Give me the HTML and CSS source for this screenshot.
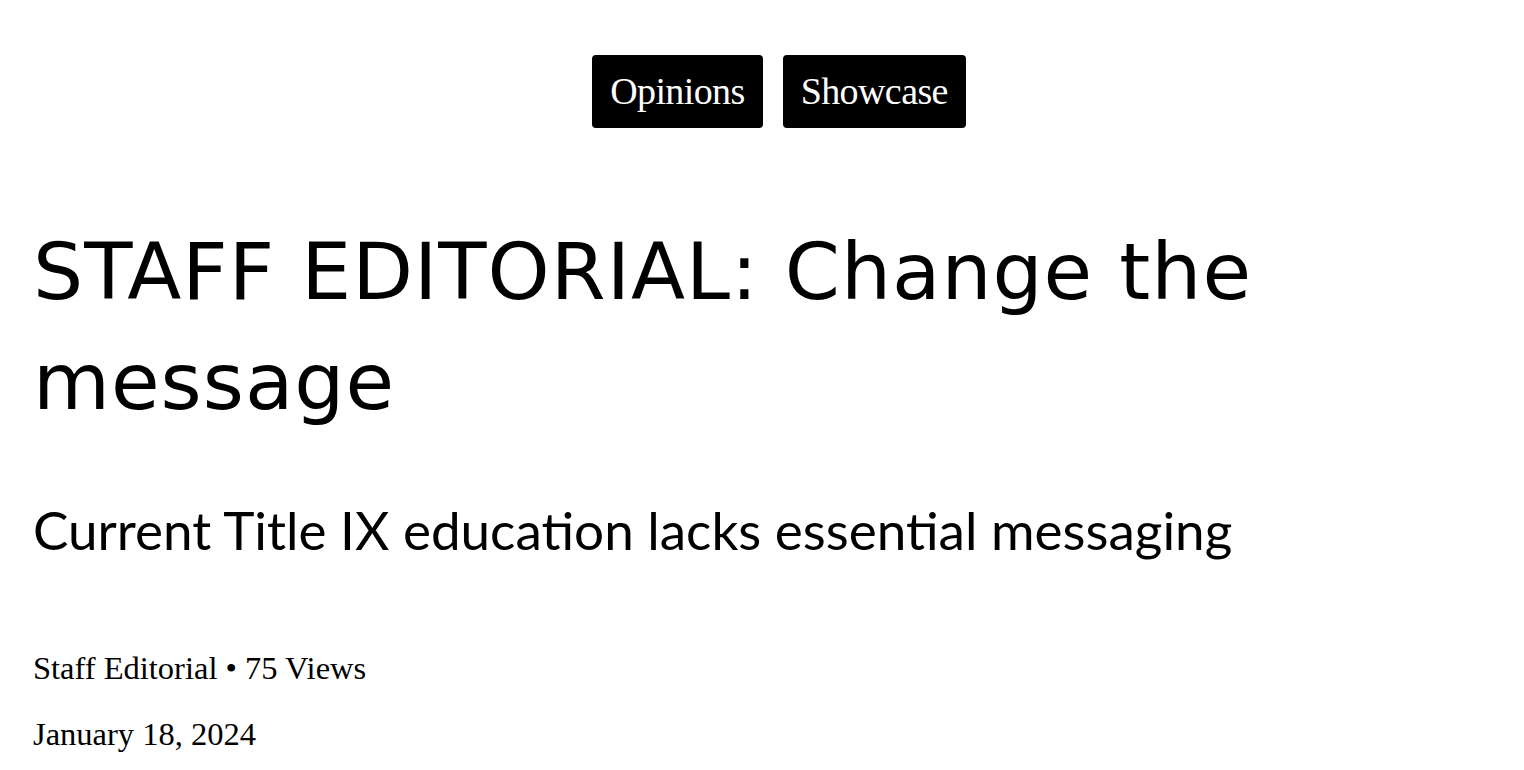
FILE: index.html
```html
<!DOCTYPE html>
<html lang="en">
<head>
    <meta charset="UTF-8">
    <meta name="viewport" content="width=device-width, initial-scale=1.0">
    <title>STAFF EDITORIAL: Change the message</title>
    <link rel="stylesheet" href="styles.css">
</head>
<body>
    <div class="story">
        <div class="cats">
            <a class="cat" href="#">Opinions</a>
            <a class="cat" href="#">Showcase</a>
        </div>

        <h1 class="headline">STAFF EDITORIAL: Change the message</h1>

        <h2 class="deck">Current Title IX education lacks essential messaging</h2>

        <div class="meta">
            <p class="byline">Staff Editorial &bull; 75 Views</p>
            <p class="date">January 18, 2024</p>
        </div>
    </div>
</body>
</html>
```

FILE: styles.css
```css
* {
    box-sizing: border-box;
    margin: 0;
    padding: 0;
}

body {
    background: #fff;
    color: #000;
    font-family: 'Liberation Serif', serif;
}

.story {
    padding: 55px 33px 0;
}

.cats {
    display: flex;
    justify-content: center;
    gap: 20px;
    padding-left: 34px;
}

.cat {
    display: block;
    background: #000;
    color: #fff;
    text-decoration: none;
    font-size: 38px;
    line-height: 73px;
    padding: 0 18px;
    border-radius: 4px;
    letter-spacing: -0.6px;
}

.headline {
    font-family: 'DejaVu Sans', sans-serif;
    font-weight: normal;
    font-size: 79px;
    line-height: 110px;
    letter-spacing: 1px;
    margin-top: 89px;
    max-width: 1400px;
}

.deck {
    font-family: Lato, sans-serif;
    font-weight: normal;
    font-size: 53px;
    line-height: 70px;
    margin-top: 58px;
}

.meta {
    margin-top: 85px;
    font-size: 32.5px;
}

.byline {
    line-height: 36px;
}

.date {
    margin-top: 30px;
    line-height: 36px;
}
```
